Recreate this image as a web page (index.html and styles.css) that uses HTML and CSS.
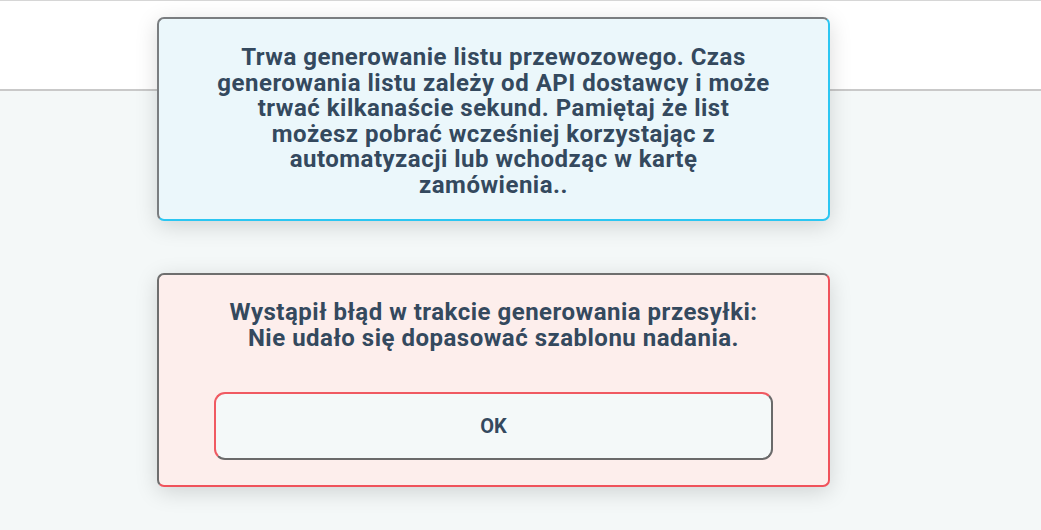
FILE: index.html
```html
<!DOCTYPE html>
<html lang="pl">
<head>
<meta charset="utf-8">
<title>Generowanie listu</title>
<link rel="stylesheet" href="styles.css">
</head>
<body>
<div class="page">
  <div class="header"></div>
  <div class="content"></div>
</div>
<div class="overlay">
  <div class="stack">
    <div class="box box-info">
      <p class="msg">Trwa generowanie listu przewozowego. Czas<br>generowania listu zależy od API dostawcy i może<br>trwać kilkanaście sekund. Pamiętaj że list<br>możesz pobrać wcześniej korzystając z<br>automatyzacji lub wchodząc w kartę<br>zamówienia..</p>
    </div>
    <div class="box box-error">
      <p class="msg">Wystąpił błąd w trakcie generowania przesyłki:<br>Nie udało się dopasować szablonu nadania.</p>
      <button class="ok">OK</button>
    </div>
  </div>
</div>
</body>
</html>
```

FILE: styles.css
```css
* { box-sizing: border-box; }
html, body { margin: 0; padding: 0; }
body {
  width: 1041px;
  height: 530px;
  overflow: hidden;
  background: #f4f8f8;
  font-family: Roboto, "Liberation Sans", sans-serif;
}
.page { display: flex; flex-direction: column; height: 530px; }
.header {
  height: 91px;
  background: #ffffff;
  border-top: 1px solid #d6d6d6;
  border-bottom: 2px solid #c9c9c9;
}
.content { flex: 1; background: #f4f8f8; }
.overlay {
  position: absolute;
  top: 0; left: 0;
  width: 1041px;
  height: 530px;
}
.stack {
  display: flex;
  flex-direction: column;
  gap: 52px;
  width: 673px;
  margin-left: 157px;
  padding-top: 17px;
}
.box {
  border-radius: 7px;
  border-width: 2px;
  border-style: solid;
  box-shadow: 0 5px 22px rgba(0, 0, 0, 0.15);
  text-align: center;
}
.box-info {
  background: #ebf7fb;
  border-color: #7a7d80 #2bc6f2 #2bc6f2 #7a7d80;
  padding: 26px 10px 20px;
  height: 204px;
}
.box-info .msg { line-height: 25.6px; }
.box-error {
  background: #fdeeec;
  border-color: #6e6e6e #f0525b #f0525b #6e6e6e;
  padding: 24px 55px 25px;
  height: 214px;
  display: flex;
  flex-direction: column;
}
.msg {
  margin: 0;
  font-size: 24px;
  line-height: 26px;
  letter-spacing: 0.5px;
  font-weight: 700;
  color: #34495e;
}
.ok {
  margin-top: 41px;
  height: 68px;
  width: 100%;
  border-radius: 11px;
  border-width: 2px;
  border-style: solid;
  border-color: #f05a62 #6a6a6a #6a6a6a #f05a62;
  background: #f4f9f9;
  font-family: Roboto, "Liberation Sans", sans-serif;
  font-size: 20px;
  font-weight: 700;
  color: #34495e;
  cursor: pointer;
}
```
